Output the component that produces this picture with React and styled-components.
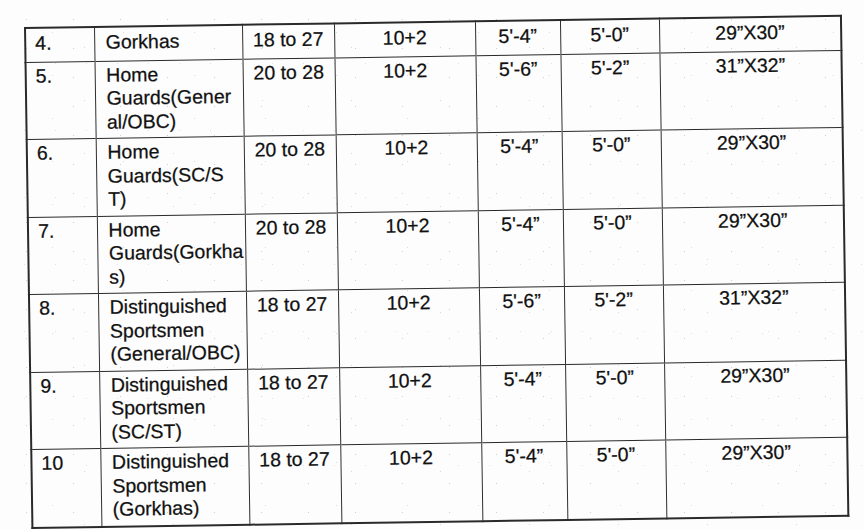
import React from "react";
import styled, { createGlobalStyle } from "styled-components";

const GlobalStyle = createGlobalStyle`
  html, body {
    margin: 0;
    padding: 0;
    width: 864px;
    height: 530px;
    overflow: hidden;
    background-color: #fdfdfd;
    background-image:
      radial-gradient(circle, rgba(120,120,120,0.35) 0.6px, transparent 1px),
      radial-gradient(circle, rgba(140,140,140,0.3) 0.6px, transparent 1px),
      radial-gradient(circle, rgba(150,150,150,0.28) 0.5px, transparent 0.9px),
      radial-gradient(circle, rgba(130,130,130,0.3) 0.5px, transparent 0.9px);
    background-size: 47px 29px, 71px 43px, 31px 67px, 89px 53px;
    background-position: 3px 5px, 17px 11px, 9px 30px, 40px 21px;
  }
  #root { width: 864px; height: 530px; }
`;

const Page = styled.main`
  width: 864px;
  height: 530px;
  padding: 27px 0 0 24px;
  box-sizing: border-box;
  font-family: "Liberation Sans", Arial, sans-serif;
  color: #111;
`;

const Table = styled.table`
  width: 816px;
  border-collapse: collapse;
  table-layout: fixed;
  transform-origin: top left;
  transform: rotate(-0.85deg);
  border: 2px solid #2a2a2a;
`;

const Row = styled.tr`
  border-top: 1.8px solid #2a2a2a;
`;

const Cell = styled.td`
  border-left: 1.5px solid #2f2f2f;
  border-right: 1.5px solid #2f2f2f;
  padding: ${(p) => (p.$first ? "3px" : "2px")}
    ${(p) => (p.$align === "left" ? "4px" : "0")}
    ${(p) => (p.$first ? "6px" : "4px")}
    ${(p) => (p.$align === "left" ? (p.$num ? "9px" : "11px") : "0")};
  text-align: ${(p) => (p.$align === "left" ? "left" : "center")};
  vertical-align: top;
  font-size: 19.5px;
  line-height: 23.5px;
  white-space: nowrap;
  overflow: hidden;
  -webkit-text-stroke: 0.25px #111;
`;

const Line = styled.span`
  display: block;
`;

const cols = [69, 148, 92, 141, 85, 99, 182];

const rows = [
  { n: "4.", name: ["Gorkhas"], age: "18 to 27", h: "5'-4\u201D", w: "5'-0\u201D", c: "29\u201DX30\u201D" },
  { n: "5.", name: ["Home", "Guards(Gener", "al/OBC)"], age: "20 to 28", h: "5'-6\u201D", w: "5'-2\u201D", c: "31\u201DX32\u201D" },
  { n: "6.", name: ["Home", "Guards(SC/S", "T)"], age: "20 to 28", h: "5'-4\u201D", w: "5'-0\u201D", c: "29\u201DX30\u201D" },
  { n: "7.", name: ["Home", "Guards(Gorkha", "s)"], age: "20 to 28", h: "5'-4\u201D", w: "5'-0\u201D", c: "29\u201DX30\u201D" },
  { n: "8.", name: ["Distinguished", "Sportsmen", "(General/OBC)"], age: "18 to 27", h: "5'-6\u201D", w: "5'-2\u201D", c: "31\u201DX32\u201D" },
  { n: "9.", name: ["Distinguished", "Sportsmen", "(SC/ST)"], age: "18 to 27", h: "5'-4\u201D", w: "5'-0\u201D", c: "29\u201DX30\u201D" },
  { n: "10", name: ["Distinguished", "Sportsmen", "(Gorkhas)"], age: "18 to 27", h: "5'-4\u201D", w: "5'-0\u201D", c: "29\u201DX30\u201D" },
];

export default function App() {
  return (
    <>
      <GlobalStyle />
      <Page>
        <Table>
          <colgroup>
            {cols.map((w, i) => (
              <col key={i} style={{ width: w }} />
            ))}
          </colgroup>
          <tbody>
            {rows.map((r, idx) => {
              const first = idx === 0;
              return (
                <Row key={r.n}>
                  <Cell $align="left" $num $first={first}>{r.n}</Cell>
                  <Cell $align="left" $first={first}>
                    {r.name.map((l, i) => (
                      <Line key={i}>{l}</Line>
                    ))}
                  </Cell>
                  <Cell $first={first}>{r.age}</Cell>
                  <Cell $first={first}>10+2</Cell>
                  <Cell $first={first}>{r.h}</Cell>
                  <Cell $first={first}>{r.w}</Cell>
                  <Cell $first={first}>{r.c}</Cell>
                </Row>
              );
            })}
          </tbody>
        </Table>
      </Page>
    </>
  );
}
